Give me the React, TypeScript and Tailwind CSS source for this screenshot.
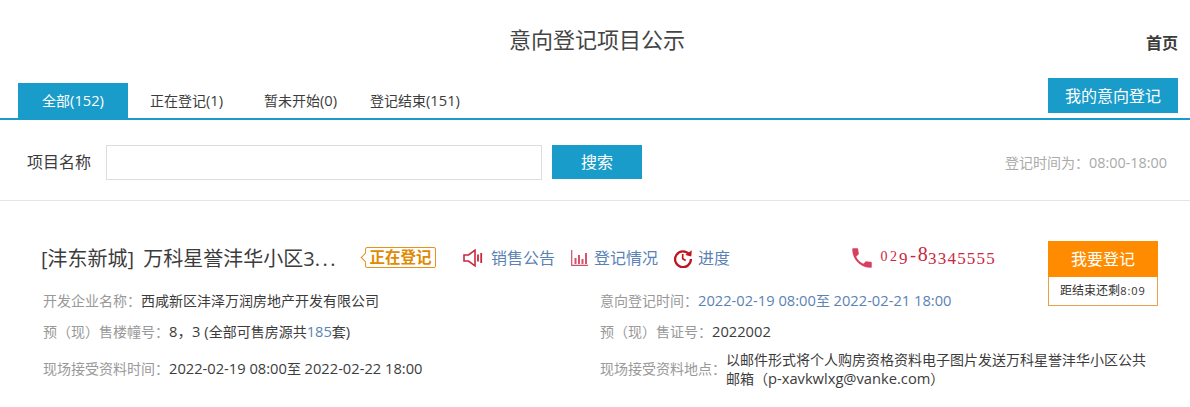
const FONT = "font-['Open_Sans','Noto_Sans_CJK_SC',sans-serif]";

function Speaker() {
  return (
    <svg width="20" height="18" viewBox="0 0 20 18" fill="none" stroke="#c9283e" strokeWidth="1.6">
      <path d="M1 6h4.500L12 1.200v15.600L5.500 12H1z" />
      <path d="M15 5.500v7M18.200 4v10" strokeWidth="1.800" />
    </svg>
  );
}

function Bars() {
  return (
    <svg width="17" height="16" viewBox="0 0 17 16" fill="none">
      <path d="M.7 0v15.300H17" stroke="#c9506e" strokeWidth="1.200" />
      <path d="M3.500 8h2v6h-2zM7 5h2v9H7zM10.500 9h2v5h-2zM14 3h2v11h-2z" fill="#d8506a" />
    </svg>
  );
}

function Clock() {
  return (
    <svg width="20" height="20" viewBox="0 0 20 20" fill="none">
      <path d="M16.300 6.500A7.900 7.900 0 1 0 17.900 11" stroke="#c01622" strokeWidth="2.300" />
      <path d="M18.800 2.200l-.5 6.300-6-1.500z" fill="#c01622" />
      <path d="M9.700 6v4.800l3 1.800" stroke="#c01622" strokeWidth="1.700" />
    </svg>
  );
}

function PhoneIcon() {
  return (
    <svg width="26" height="26" viewBox="0 0 24 24" fill="#d9405f">
      <path d="M6.620 10.790c1.440 2.830 3.760 5.140 6.590 6.590l2.200-2.200c.27-.27.67-.36 1.020-.24 1.120.37 2.330.57 3.570.57.55 0 1 .45 1 1V20c0 .55-.45 1-1 1-9.390 0-17-7.610-17-17 0-.55.45-1 1-1h3.500c.55 0 1 .45 1 1 0 1.250.2 2.450.57 3.570.11.35.03.74-.25 1.020l-2.200 2.200z" />
    </svg>
  );
}

// the number in the picture has old-style figures, no installed font has them
function OldDigit({ d }: { d: string }) {
  let cls = "text-[18px]";
  if (d === "0" || d === "2") cls = "text-[14px]";
  if (d === "3" || d === "4" || d === "5" || d === "9") cls = "text-[17px] align-[-3px]";
  if (d === "8") cls = "text-[20px]";
  return <span className={"inline-block w-[9.7px] text-center " + cls}>{d}</span>;
}

function Num({ children }: { children: React.ReactNode }) {
  return <span className="text-[14.7px]">{children}</span>;
}

function Field({ label, children, className }: { label: string; children: React.ReactNode; className?: string }) {
  return (
    <div className={"flex items-center " + (className ?? "")}>
      <span className="shrink-0 text-[#999]">{label}</span>
      {children}
    </div>
  );
}

export default function App() {
  const tabs = [
    { name: "正在登记", count: "(1)", cls: "ml-[22px] w-[73px]" },
    { name: "暂未开始", count: "(0)", cls: "ml-[41px] w-[74px]" },
    { name: "登记结束", count: "(151)", cls: "ml-[32px] w-[90px]" },
  ];

  return (
    <div className={"h-[407px] w-[1190px] overflow-hidden bg-white text-[#3c3c3c] " + FONT}>
      <div className="flex h-[78px] items-start">
        <h1 className="ml-[509px] mt-[24px] text-[22px] leading-[30px] font-normal text-[#444]">意向登记项目公示</h1>
        <a className="ml-auto mr-[12px] mt-[32px] text-[16px] leading-[22px] font-bold">首页</a>
      </div>

      <div className="flex h-[42px] items-start border-b-2 border-[#1a9ccb] pl-[18px] pr-[12px]">
        <div className="mt-[5px] flex h-[35px] items-center text-[14px]">
          <div className="flex h-[35px] w-[110px] items-center justify-center bg-[#1a9ccb] text-white">
            全部<Num>(152)</Num>
          </div>
          {tabs.map((t) => (
            <div key={t.name} className={"whitespace-nowrap " + t.cls}>
              {t.name}
              <Num>{t.count}</Num>
            </div>
          ))}
        </div>
        <button className="ml-auto h-[35px] w-[130px] bg-[#1a9ccb] text-[16px] text-white">我的意向登记</button>
      </div>

      <div className="flex h-[81px] items-start border-b border-[#e5e5e5] pl-[27px] pr-[23px] pt-[25px]">
        <span className="text-[16px] leading-[35px]">项目名称</span>
        <input className="ml-[15px] h-[35px] w-[436px] border border-[#ddd]" />
        <button className="ml-[10px] h-[34px] w-[90px] bg-[#1a9ccb] text-[16px] text-white">搜索</button>
        <span className="ml-auto text-[14px] leading-[35px] text-[#aaa]">
          登记时间为：<span className="text-[14.400px]">08:00-18:00</span>
        </span>
      </div>

      <div className="flex h-[83px] items-start pl-[41px] pr-[32px] pt-[40px]">
        <h2 className="w-[324px] whitespace-nowrap text-[20px] leading-[36px] font-normal">
          [沣东新城]<span className="ml-[4px]"> </span>万科星誉沣华小区3<span className="tracking-[2.500px]">...</span>
        </h2>
        <span className="relative mt-[6px] flex h-[21px] w-[71px] items-center justify-center rounded-[2px] border border-[#e8921a] text-[15.500px] font-bold text-[#e08a00]">
          <i className="absolute left-[-4px] top-[6px] size-[7px] rotate-45 border-b border-l border-[#e8921a] bg-white" />
          正在登记
        </span>
        <span className="ml-[27px] mt-[7px] flex items-center text-[16px] leading-[20px] text-[#5b82b5]">
          <Speaker />
          <span className="ml-[8px]">销售公告</span>
        </span>
        <span className="ml-[16px] mt-[7px] flex items-center text-[16px] leading-[20px] text-[#5b82b5]">
          <Bars />
          <span className="ml-[6px]">登记情况</span>
        </span>
        <span className="ml-[15px] mt-[7px] flex items-center text-[16px] leading-[20px] text-[#5b82b5]">
          <Clock />
          <span className="ml-[5px]">进度</span>
        </span>
        <span className="ml-[119px] mt-[4px] flex h-[26px] items-center font-['Liberation_Serif',serif] leading-[20px] text-[#c9283e]">
          <PhoneIcon />
          <span className="-mt-[3px] ml-[4px] whitespace-nowrap">
            {"029".split("").map((d, i) => (
              <OldDigit key={i} d={d} />
            ))}
            <span className="inline-block w-[9.7px] text-center text-[18px]">-</span>
            {"83345555".split("").map((d, i) => (
              <OldDigit key={i} d={d} />
            ))}
          </span>
        </span>
        <div className="ml-auto w-[110px]">
          <button className="h-[36px] w-full bg-[#ff8c00] text-[16px] text-white">我要登记</button>
          <div className="flex h-[29px] items-center justify-center border border-t-0 border-[#e8a04a] text-[12px] text-[#333]">
            距结束还剩<span className="text-[11px] tracking-[1px]">8:09</span>
          </div>
        </div>
      </div>

      <div className="grid grid-cols-[558px_1fr] pl-[43px] pr-[40px] text-[14px]">
        <div>
          <Field label="开发企业名称：" className="h-[32px]">
            <span>西咸新区沣泽万润房地产开发有限公司</span>
          </Field>
          <Field label="预（现）售楼幢号：" className="h-[31px]">
            <span>
              <Num>8，3 (</Num>全部可售房源共<Num><span className="text-[#5b82b5]">185</span></Num>套<Num>)</Num>
            </span>
          </Field>
          <Field label="现场接受资料时间：" className="h-[43px]">
            <span>
              <Num>2022-02-19 08:00</Num>至 <Num>2022-02-22 18:00</Num>
            </span>
          </Field>
        </div>
        <div className="-ml-[1px]">
          <Field label="意向登记时间：" className="h-[32px]">
            <span className="text-[#5b82b5]">
              <Num>2022-02-19 08:00</Num>至 <Num>2022-02-21 18:00</Num>
            </span>
          </Field>
          <Field label="预（现）售证号：" className="h-[31px]">
            <Num>2022002</Num>
          </Field>
          <Field label="现场接受资料地点：" className="h-[43px]">
            <span className="leading-[19px]">
              以邮件形式将个人购房资格资料电子图片发送万科星誉沣华小区公共邮箱（<Num>p-xavkwlxg@vanke.com</Num>）
            </span>
          </Field>
        </div>
      </div>
    </div>
  );
}
